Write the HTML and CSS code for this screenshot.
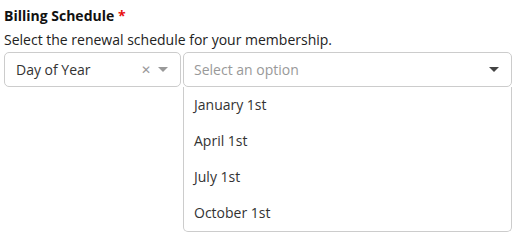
FILE: index.html
```html
<!DOCTYPE html>
<html>
<head>
<meta charset="utf-8">
<link rel="stylesheet" href="styles.css">
</head>
<body>
<div class="field">
  <div class="label">Billing Schedule <span class="req">*</span></div>
  <div class="help">Select the renewal schedule for your membership.</div>
  <div class="row">
    <div class="select first">
      <span class="value">Day of Year</span>
      <span class="clear">&#x2715;</span>
      <svg class="caret light" width="10" height="5" viewBox="0 0 10 5"><path d="M0 0h10L5 5z"/></svg>
    </div>
    <div class="second">
      <div class="select open">
        <span class="placeholder">Select an option</span>
        <svg class="caret dark" width="10" height="5" viewBox="0 0 10 5"><path d="M0 0h10L5 5z"/></svg>
      </div>
      <ul class="menu">
        <li>January 1st</li>
        <li>April 1st</li>
        <li>July 1st</li>
        <li>October 1st</li>
      </ul>
    </div>
  </div>
</div>
</body>
</html>
```
FILE: styles.css
```css
html, body { margin: 0; padding: 0; background: #fff; }
body { font-family: "Open Sans", "Liberation Sans", sans-serif; color: #222; font-size: 14px; }
.field { padding: 6px 9px 0 4px; }
.label { font-weight: 700; line-height: 20px; color: #111; }
.req { color: #e8110f; }
.help { margin-top: 4px; line-height: 20px; color: #222; }
.row { display: flex; gap: 2px; margin-top: 2px; align-items: flex-start; }
.select {
  box-sizing: border-box; height: 35px; border: 1px solid #ccc; border-radius: 5px;
  display: flex; align-items: center; background: #fff;
}
.first { width: 177px; padding: 0 12px 0 11px; }
.first .value { flex: 1; color: #333; }
.clear { color: #999; font-size: 12px; margin-right: 7px; }
.caret { display: block; }
.light { fill: #999; }
.dark { fill: #444; }
.second { flex: 1; }
.open { padding: 0 12px 0 10px; }
.placeholder { flex: 1; color: #999; }
.menu {
  list-style: none; margin: 0; padding: 0; border: 1px solid #ccc; border-top: 0;
  border-radius: 0 0 5px 5px; background: #fff;
}
.menu li { height: 36px; line-height: 36px; padding-left: 10px; color: #333; }
```
